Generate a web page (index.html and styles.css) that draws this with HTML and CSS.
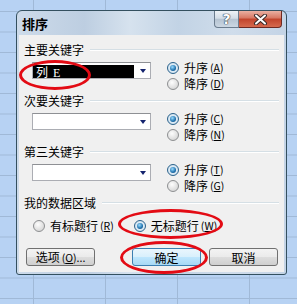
FILE: index.html
```html
<!DOCTYPE html>
<html lang="zh-CN">
<head>
<meta charset="utf-8">
<title>排序</title>
<link rel="stylesheet" href="styles.css">
</head>
<body>
<div class="dialog">
  <div class="titlebar">
    <span class="title">排序</span>
    <div class="caption">
      <span class="cap-help">?</span>
      <span class="cap-close"><svg width="17" height="11" viewBox="0 0 17 11"><path d="M4 1.5 L13 9.5 M13 1.5 L4 9.5" stroke="#3a2a28" stroke-width="4" stroke-linecap="round"/><path d="M4 1.5 L13 9.5 M13 1.5 L4 9.5" stroke="#ffffff" stroke-width="2" stroke-linecap="round"/></svg></span>
    </div>
  </div>
  <div class="client">
    <section class="group">
      <div class="group-head"><span>主要关键字</span><i class="rule"></i></div>
      <div class="group-body">
        <div class="combo"><span class="val">列<span class="col">E</span></span><span class="arrow"></span></div>
        <div class="radios">
          <div class="radio"><span class="rb on"></span>升序<span class="key">(<u>A</u>)</span></div>
          <div class="radio"><span class="rb"></span>降序<span class="key">(<u>D</u>)</span></div>
        </div>
      </div>
    </section>
    <section class="group">
      <div class="group-head"><span>次要关键字</span><i class="rule"></i></div>
      <div class="group-body">
        <div class="combo"><span class="arrow"></span></div>
        <div class="radios">
          <div class="radio"><span class="rb on"></span>升序<span class="key">(<u>C</u>)</span></div>
          <div class="radio"><span class="rb"></span>降序<span class="key">(<u>N</u>)</span></div>
        </div>
      </div>
    </section>
    <section class="group">
      <div class="group-head"><span>第三关键字</span><i class="rule"></i></div>
      <div class="group-body">
        <div class="combo"><span class="arrow"></span></div>
        <div class="radios">
          <div class="radio"><span class="rb on"></span>升序<span class="key">(<u>T</u>)</span></div>
          <div class="radio"><span class="rb"></span>降序<span class="key">(<u>G</u>)</span></div>
        </div>
      </div>
    </section>
    <section class="area">
      <div class="group-head"><span>我的数据区域</span><i class="rule"></i></div>
      <div class="area-body">
        <div class="radio"><span class="rb"></span>有标题行<span class="key">(<u>R</u>)</span></div>
        <div class="radio second"><span class="rb on"></span>无标题行<span class="key">(<u>W</u>)</span></div>
      </div>
    </section>
    <div class="buttons">
      <button class="btn first">选项<span class="key">(<u>O</u>)...</span></button>
      <button class="btn default">确定</button>
      <button class="btn last">取消</button>
    </div>
  </div>
</div>
<div class="mark m1"></div>
<div class="mark m2"></div>
<div class="mark m3"></div>
</body>
</html>
```
FILE: styles.css
```css
html { margin: 0; }
body {
  margin: 0;
  width: 297px;
  height: 304px;
  overflow: hidden;
  box-sizing: border-box;
  padding: 10px 0 0 16px;
  position: relative;
  font-family: "Noto Sans CJK SC", sans-serif;
  font-size: 12px;
  color: #000;
  background-color: #b7d2f3;
  background-image:
    linear-gradient(to right, #a0b9d7 1px, transparent 1px),
    linear-gradient(to bottom, #a0b9d7 1px, transparent 1px);
  background-size: 72px 100%, 100% 20.5px;
  background-position: 33px 0, 0 11px;
}

.dialog {
  width: 271px;
  height: 265px;
  box-sizing: border-box;
  border: 1px solid #34505f;
  border-radius: 6px 6px 3px 3px;
  background: linear-gradient(90deg, #cddbea 0%, #bdcee1 25%, #d6e2ee 42%, #c2d3e5 60%, #d0ddeb 80%, #c4d4e6 100%);
  display: flex;
  flex-direction: column;
  padding: 0 2px 2px;
}

.titlebar {
  height: 24px;
  display: flex;
  align-items: flex-start;
  flex: none;
}
.title {
  font-weight: bold;
  font-size: 13px;
  line-height: 26px;
  padding-left: 3px;
}
.caption {
  margin-left: auto;
  margin-right: 2px;
  display: flex;
}
.cap-help {
  width: 25px;
  height: 17px;
  box-sizing: border-box;
  border: 1px solid #6b7c8e;
  border-top: none;
  border-radius: 0 0 0 4px;
  background: linear-gradient(#eef2f6 0%, #d3dde7 45%, #b6c4d2 52%, #cbd7e3 100%);
  display: flex;
  align-items: center;
  justify-content: center;
  font: bold 14px "DejaVu Sans", sans-serif;
  color: #fff;
  text-shadow: 0 0 1px #2d3a48, 0 0 1px #2d3a48, 0 0 1px #2d3a48;
}
.cap-close {
  width: 43px;
  height: 17px;
  box-sizing: border-box;
  border: 1px solid #6e2a22;
  border-top: none;
  border-left: none;
  border-radius: 0 0 4px 0;
  background: linear-gradient(#eab0a2 0%, #d87a66 42%, #c2452d 52%, #d66a4e 100%);
  display: flex;
  align-items: center;
  justify-content: center;
}

.client {
  flex: 1;
  background: #f0f0f0;
  padding: 8px 0 0 5px;
}

.group { height: 51px; }
.group-head {
  display: flex;
  align-items: center;
  height: 14px;
  line-height: 14px;
}
.rule {
  flex: 1;
  margin: 0 5px 0 6px;
  border-top: 1px solid #d5dfe5;
  border-bottom: 1px solid #ffffff;
}
.group-body {
  display: flex;
  margin: 5px 0 0 8px;
}
.combo {
  width: 119px;
  height: 17px;
  box-sizing: border-box;
  border: 1px solid #abadb3;
  border-top-color: #8e9094;
  background: #fff;
  display: flex;
  align-items: center;
}
.val {
  align-self: flex-start;
  margin-top: 2px;
  width: 101px;
  height: 13px;
  box-sizing: border-box;
  padding-left: 3px;
  background: #000;
  color: #fff;
  line-height: 13px;
  font-size: 12px;
}
.col {
  margin-left: 5px;
  font-family: "Liberation Serif", serif;
  font-size: 12px;
}
.arrow {
  margin-left: auto;
  margin-right: 4px;
  width: 0;
  height: 0;
  border-left: 3.5px solid transparent;
  border-right: 3.5px solid transparent;
  border-top: 4px solid #14236e;
}
.radios {
  display: flex;
  flex-direction: column;
  margin: -2px 0 0 16px;
}
.radio {
  display: flex;
  align-items: center;
  height: 16px;
  line-height: 16px;
  white-space: nowrap;
}
.key {
  margin-left: 2px;
  font-size: 10.5px;
}
.rb {
  width: 12px;
  height: 12px;
  box-sizing: border-box;
  border-radius: 50%;
  border: 1px solid #8d8f91;
  background: radial-gradient(circle at 40% 35%, #fdfdfd, #d8d8d8 75%);
  margin-right: 5px;
  display: flex;
  align-items: center;
  justify-content: center;
  flex: none;
}
.rb.on {
  border-color: #2c628b;
  background: radial-gradient(circle, #f4f9fd, #cfe2f0 80%);
}
.rb.on::before {
  content: "";
  width: 6px;
  height: 6px;
  border-radius: 50%;
  background: radial-gradient(circle at 40% 35%, #9adcff, #1f71ad 60%, #0c3f6e);
}
u { text-decoration: underline; text-underline-offset: 1px; }

.area-body {
  display: flex;
  margin: 8px 0 0 9px;
}
.radio.second { margin-left: 20px; }

.buttons {
  display: flex;
  margin-top: 14px;
}
.btn {
  width: 69px;
  height: 18px;
  box-sizing: border-box;
  padding: 0;
  border: 1px solid #707070;
  border-radius: 3px;
  background: linear-gradient(#f3f3f3 0%, #ebebeb 48%, #dddddd 52%, #cfcfcf 100%);
  font-family: "Noto Sans CJK SC", sans-serif;
  font-size: 12px;
  line-height: 15px;
  color: #000;
  text-align: center;
}
.btn.first { margin-left: 2px; }
.btn.default {
  margin-left: 37px;
  border-color: #3c7fb1;
  background: linear-gradient(#eaf6fd 0%, #d9f0fc 48%, #bee6fd 52%, #a7d9f5 100%);
}
.btn.last { margin-left: 8px; }

.mark {
  position: absolute;
  box-sizing: border-box;
  border: 3px solid #e30b14;
  border-radius: 50%;
}
.m1 { left: 19px; top: 60px; width: 72px; height: 30px; }
.m2 { left: 118px; top: 209px; width: 105px; height: 30px; }
.m3 { left: 120px; top: 241px; width: 88px; height: 33px; }
```
